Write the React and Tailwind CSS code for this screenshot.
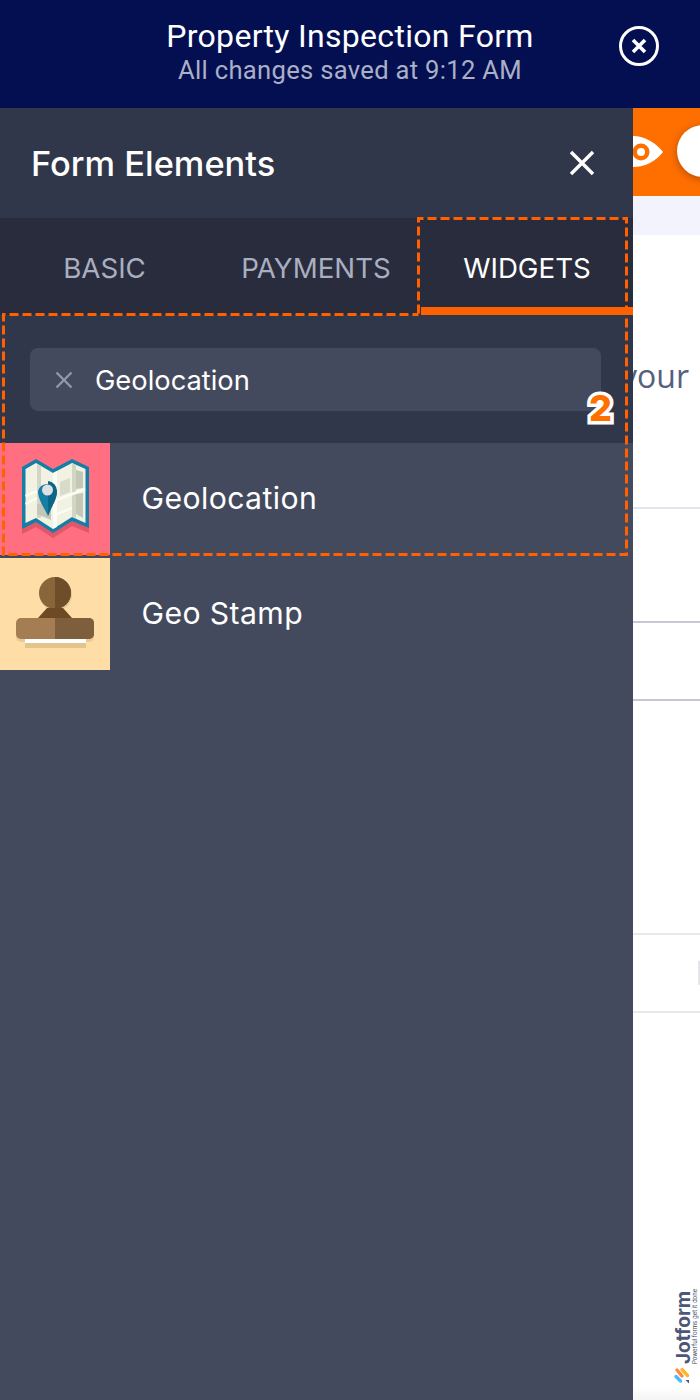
import React from "react";

function MapIcon() {
  return (
    <svg width="72" height="82" viewBox="0 0 72 82" className="ml-[2px]">
      <path d="M2 12 L16 4 L33 14 L52 4 L69 12 L69 73 L52 66 L33 78 L16 67 L2 74Z" fill="#c9485a" opacity="0.6" transform="translate(0 2)" />
      <path d="M2 9 L16 1 L33 11 L52 1 L69 9 L69 70 L52 63 L33 75 L16 64 L2 71Z" fill="#157ea6" />
      <path d="M5.5 11 L16 5 L33 15 L52 5 L65.5 11 L65.5 65 L52 59 L33 71 L16 60 L5.5 65Z" fill="#f1f2e2" />
      <path d="M17 6 L21 8 L21 60 L17 60Z" fill="#d4d6c5" />
      <path d="M33 15 L37 13 L37 69 L33 71Z" fill="#ffffff" opacity="0.8" />
      <path d="M52 5 L56 7 L56 60 L52 59Z" fill="#d4d6c5" />
      <path d="M17 46 L31 44 L31 62 L17 56Z" fill="#c5c7b6" />
      <path d="M56 12 L63 14 L63 30 L56 31Z" fill="#c5c7b6" />
      <path d="M56 36 L63 35 L63 60 L56 56Z" fill="#c5c7b6" />
      <path d="M40 24 L50 20 L50 34 L40 38Z" fill="#d9dbca" />
      <path d="M5.5 46 L17 40 M5.5 38 L17 33 M37 42 L65 31 M37 56 L52 50" stroke="#fbfcf3" strokeWidth="2.5" fill="none" />
      <path d="M18 33 A10 10 0 0 1 37 33 C37 42 31 49 28 58 C24 49 18 42 18 33Z" fill="#157ea6" />
      <path d="M28 23 A10 10 0 0 1 37 33 C37 42 31 49 28 58Z" fill="#0c6688" />
      <circle cx="27.5" cy="32" r="5.5" fill="#dfe0e4" />
    </svg>
  );
}

function StampIcon() {
  return (
    <svg width="80" height="87" viewBox="0 0 80 87" className="ml-[2px]">
      <circle cx="40" cy="24" r="16" fill="#e8cb94" />
      <rect x="9" y="72" width="61" height="5" fill="#e2c48c" />
      <rect x="0" y="50" width="78" height="21" rx="5" fill="#e8cb94" />
      <circle cx="39" cy="22" r="16" fill="#8a6539" />
      <path d="M39 6 A16 16 0 0 1 39 38Z" fill="#6e4d2b" />
      <path d="M31 37 L47 37 L56 47 L22 47Z" fill="#6e4a24" />
      <rect x="0" y="47" width="78" height="21" rx="5" fill="#a47d52" />
      <path d="M39 47 L73 47 A5 5 0 0 1 78 52 L78 63 A5 5 0 0 1 73 68 L39 68Z" fill="#7e5f3d" />
      <rect x="9" y="68" width="61" height="4" fill="#ffffff" />
    </svg>
  );
}

function Row({ label, bg, children }) {
  return (
    <div className="flex h-[115px] items-start bg-[#444a5e]">
      <div className={`flex h-[112px] w-[110px] shrink-0 items-center justify-center ${bg}`}>{children}</div>
      <div className="ml-[31.5px] flex h-[112px] items-center text-[30.2px] text-white tracking-[0.4px]">{label}</div>
    </div>
  );
}

export default function App() {
  return (
    <div className="relative flex h-[1400px] w-[700px] flex-col overflow-hidden bg-white font-['Inter','Liberation_Sans',sans-serif]">
      <header className="relative flex h-[108px] shrink-0 flex-col items-center bg-[#040f52] pt-[18px] font-['Roboto','Inter',sans-serif]">
        <div className="text-[32px] leading-[36px] tracking-[0.3px] text-white">Property Inspection Form</div>
        <div className="text-[25.6px] leading-[32px] tracking-[0.3px] text-[#aab0c6]">All changes saved at 9:12 AM</div>
        <svg className="absolute left-[618px] top-[24.5px]" width="42" height="42" viewBox="0 0 42 42" fill="none" stroke="#ffffff">
          <circle cx="21" cy="21" r="18.5" strokeWidth="3" />
          <path d="M15 15 L27 27 M27 15 L15 27" strokeWidth="3.6" />
        </svg>
      </header>

      <div className="flex min-h-0 flex-1">
        <aside className="relative z-10 flex w-[633px] shrink-0 flex-col bg-[#444a5e]">
          <div className="flex h-[110px] items-center justify-between bg-[#31374a] pl-[31px] pr-[38px]">
            <span className="pt-[2px] text-[34.4px] font-medium text-white">Form Elements</span>
            <svg width="26" height="26" viewBox="0 0 26 26" stroke="#ffffff" strokeWidth="3.4" fill="none">
              <path d="M2 2 L24 24 M24 2 L2 24" />
            </svg>
          </div>
          <div className="flex h-[97px] bg-[#292c3d] text-[27.7px] text-[#a9afc0]">
            <div className="flex w-[209px] items-center justify-center pt-[5px]">BASIC</div>
            <div className="flex w-[212px] items-center justify-center pl-[2px] pt-[5px]">PAYMENTS</div>
            <div className="flex w-[212px] items-center justify-center border-b-[8px] border-[#ff6100] pt-[13px] text-white">WIDGETS</div>
          </div>
          <div className="flex h-[128px] items-start bg-[#31374a] pl-[30px] pr-[32px] pt-[33px]">
            <div className="flex h-[63px] w-full items-center rounded-[8px] bg-[#444a5e] pl-[25px] text-[27.3px] text-white">
              <svg width="18" height="18" viewBox="0 0 18 18" stroke="#9298aa" strokeWidth="2.4" fill="none">
                <path d="M1.5 1.5 L16.5 16.5 M16.5 1.5 L1.5 16.5" />
              </svg>
              <span className="ml-[22px] pt-[3px]">Geolocation</span>
            </div>
          </div>
          <Row label="Geolocation" bg="bg-[#ff6f81]"><MapIcon /></Row>
          <Row label="Geo Stamp" bg="bg-[#ffdda6]"><StampIcon /></Row>
        </aside>

        <main className="flex min-w-0 flex-1 flex-col font-['Open_Sans','Inter',sans-serif]">
          <div className="relative h-[88px] shrink-0 overflow-hidden bg-[#ff6f00]">
            <svg className="absolute left-0 top-[28px]" width="32" height="32" viewBox="0 0 32 32">
              <path d="M0 0 C12 0 23 7 30 16 C23 25 12 31 0 31Z" fill="#ffffff" />
              <circle cx="8" cy="16" r="8.5" fill="#ff6f00" />
              <circle cx="8" cy="16" r="4" fill="#ffffff" />
            </svg>
            <div className="absolute left-[44px] top-[17px] h-[52px] w-[52px] rounded-full bg-white shadow-[0_2px_8px_rgba(0,0,0,0.3)]" />
          </div>
          <div className="h-[39px] shrink-0 bg-[#f3f3fe]" />
          <div className="flex h-[274px] shrink-0 items-start border-b-2 border-[#e4e5ec] pt-[121px]">
            <span className="-ml-[12px] text-[32px] leading-[40px] text-[#55607e]">your</span>
          </div>
          <div className="h-[114px] shrink-0 border-b-2 border-[#c6c8d6]" />
          <div className="h-[78px] shrink-0 border-b-2 border-[#c6c8d6]" />
          <div className="h-[234px] shrink-0 border-b-2 border-[#e8e9ef]" />
          <div className="flex h-[78px] shrink-0 items-center justify-end border-b-2 border-[#e8e9ef]">
            <div className="h-[24px] w-[2px] bg-[#e6e6ea]" />
          </div>
          <div className="relative flex-1 bg-[linear-gradient(to_bottom,#ffffff_96.5%,#f5f5f5)]">
            <div className="absolute left-[44px] top-[351px] flex h-[20px] origin-top-left -rotate-90 flex-col justify-center">
              <span className="text-[19px] font-bold leading-[14px] text-[#4c5678] font-['Inter',sans-serif]">Jotform</span>
              <span className="whitespace-nowrap text-[6px] leading-[7px] text-[#3a3f55] font-['Inter',sans-serif]">Powerful forms get it done</span>
            </div>
            <svg className="absolute left-[40px] top-[354px]" width="18" height="18" viewBox="0 0 18 18" fill="none" strokeWidth="3.4" strokeLinecap="round">
              <path d="M4 3 L9 9" stroke="#ff8a3d" />
              <path d="M9 2.5 L14.5 8.5" stroke="#ffb629" />
              <path d="M3 9.5 L7.5 14" stroke="#4db8ff" />
              <path d="M12.5 13 L16 13 L16 16.5Z" fill="#4c5678" stroke="none" />
            </svg>
          </div>
        </main>
      </div>

      <svg className="pointer-events-none absolute left-0 top-0 z-20" width="700" height="1400" fill="none">
        <path d="M418.5 313.5 L418.5 218.5 L626.5 218.5 L626.5 554.5 L3.5 554.5 L3.5 314.5 L418.5 314.5" stroke="#ff6100" strokeWidth="3" strokeDasharray="9 4" />
      </svg>
      <span className="absolute left-[589px] top-[386px] z-20 text-[36px] font-extrabold leading-[44px] text-[#ff6f00] [-webkit-text-stroke:7px_#ffffff] [paint-order:stroke_fill]">2</span>
    </div>
  );
}
